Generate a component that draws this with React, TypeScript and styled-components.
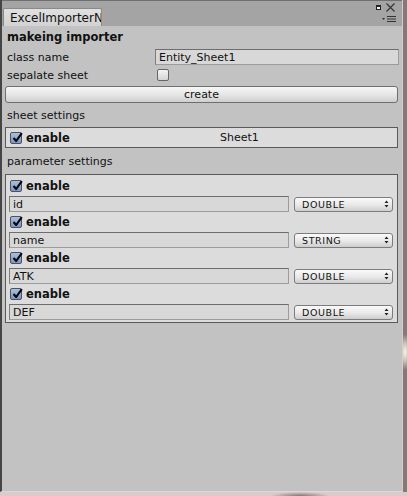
import React from "react";
import styled, { createGlobalStyle } from "styled-components";

const Global = createGlobalStyle`
  html, body { margin: 0; padding: 0; }
  body {
    width: 407px;
    height: 496px;
    overflow: hidden;
    font-family: "DejaVu Sans", "Liberation Sans", sans-serif;
    font-size: 11px;
    color: #111;
    background:
      radial-gradient(ellipse 6px 18px at 405px 352px, #fff6ea 0%, rgba(255,240,225,0.6) 50%, rgba(255,240,225,0) 100%),
      linear-gradient(90deg, #8c7a76 0%, #8a7672 100%);
  }
`;

const Desktop = styled.div`
  width: 407px;
  height: 496px;
  display: flex;
  flex-direction: column;
  background:
    radial-gradient(ellipse 30px 4px at 300px 496px, rgba(60,50,50,0.55) 0%, rgba(60,50,50,0) 100%),
    linear-gradient(180deg, transparent 0, transparent 492px, #dccbcb 492px);
`;

const Window = styled.div`
  width: 400px;
  height: 491px;
  display: flex;
  flex-direction: column;
  background: #c2c2c2;
  border-left: 2px solid #454545;
  border-right: 1px solid #cfcfcf;
  border-bottom: 1px solid #d9d9d9;
`;

const TabBar = styled.div`
  position: relative;
  height: 25px;
  flex: none;
  display: flex;
  align-items: flex-end;
  padding-left: 1px;
  background: #a4a4a4;
  border-top: 1px solid #6f6f6f;
`;

const Tab = styled.div`
  width: 91px;
  height: 17px;
  padding-left: 6px;
  display: flex;
  align-items: center;
  overflow: hidden;
  white-space: nowrap;
  background: linear-gradient(180deg, #e0e0e0 0%, #d2d2d2 100%);
  border: 1px solid #8a8a8a;
  border-bottom: none;
  border-radius: 2px 2px 0 0;
  font-size: 12px;
  color: #111;
`;

const WinIcons = styled.div`
  position: absolute;
  right: 6px;
  top: 2px;
  display: flex;
  flex-direction: column;
  align-items: flex-end;
  gap: 3px;
`;

const Content = styled.div`
  display: flex;
  flex-direction: column;
  padding: 2px 3px 0 3px;
`;

const Title = styled.div`
  height: 18px;
  display: flex;
  align-items: center;
  padding-left: 2px;
  font-weight: bold;
  font-size: 11.5px;
`;

const FieldRow = styled.div<{ $mt: number }>`
  height: 16px;
  margin-top: ${(p) => p.$mt}px;
  display: grid;
  grid-template-columns: 148px 1fr;
  align-items: center;
  padding-left: 2px;
`;

const TextField = styled.div`
  height: 16px;
  box-sizing: border-box;
  display: flex;
  align-items: center;
  padding-left: 3px;
  background: #d8d8d8;
  border: 1px solid #9c9c9c;
  border-top-color: #6d6d6d;
  border-left-color: #7d7d7d;
  color: #111;
  overflow: hidden;
  white-space: nowrap;
`;

const CheckBox = styled.span<{ $checked?: boolean }>`
  width: 12px;
  height: 12px;
  box-sizing: border-box;
  flex: none;
  display: inline-flex;
  align-items: center;
  justify-content: center;
  border: 1px solid ${(p) => (p.$checked ? "#4a5260" : "#666")};
  border-radius: 2px;
  background: ${(p) =>
    p.$checked
      ? "linear-gradient(180deg, #a9bfe0 0%, #7c95c2 100%)"
      : "linear-gradient(180deg, #f4f4f4 0%, #d4d4d4 100%)"};
  position: relative;
`;

const Button = styled.div`
  margin-top: 3px;
  height: 17px;
  box-sizing: border-box;
  display: flex;
  align-items: center;
  justify-content: center;
  background: linear-gradient(180deg, #f6f6f6 0%, #e6e6e6 50%, #cfcfcf 100%);
  border: 1px solid #6f6f6f;
  border-radius: 3px;
  width: 393px;
`;

const Label = styled.div<{ $mt: number }>`
  height: 18px;
  margin-top: ${(p) => p.$mt}px;
  display: flex;
  align-items: center;
  padding-left: 2px;
`;

const Box = styled.div<{ $mt: number }>`
  margin-top: ${(p) => p.$mt}px;
  width: 393px;
  box-sizing: border-box;
  background: #dcdcdc;
  border: 1px solid #5a5a5a;
`;

const SheetRow = styled.div`
  height: 19px;
  display: grid;
  grid-template-columns: 210px 1fr;
  align-items: center;
  padding-left: 4px;
`;

const Enable = styled.label`
  display: flex;
  align-items: center;
  gap: 4px;
  height: 18px;
  font-weight: bold;
  font-size: 11.5px;
`;

const ParamList = styled.div`
  display: flex;
  flex-direction: column;
  gap: 1px;
  padding: 2px 4px 2px 3px;
`;

const ParamEnable = styled(Enable)`
  padding-left: 1px;
`;

const ParamRow = styled.div`
  height: 16px;
  display: grid;
  grid-template-columns: 280px 99px;
  column-gap: 5px;
  align-items: center;
`;

const Select = styled.div`
  height: 15px;
  box-sizing: border-box;
  display: flex;
  align-items: center;
  justify-content: space-between;
  padding: 0 3px 0 7px;
  background: linear-gradient(180deg, #fafafa 0%, #e8e8e8 55%, #cdcdcd 100%);
  border: 1px solid #7c7c7c;
  border-radius: 3px;
  font-size: 9.5px;
  letter-spacing: 0.6px;
  color: #111;
`;

const Check = () => (
  <svg width="11" height="11" viewBox="0 0 11 11" style={{ position: "absolute", left: 1, top: -1 }}>
    <path d="M1.5 6 L4.2 9 L9.8 1.2" stroke="#050505" strokeWidth="2.1" fill="none" strokeLinejoin="round" />
  </svg>
);

const Arrows = () => (
  <svg width="5" height="8" viewBox="0 0 5 8">
    <path d="M0.5 3 L2.5 0.5 L4.5 3 Z M0.5 5 L2.5 7.5 L4.5 5 Z" fill="#222" />
  </svg>
);

const params = [
  { name: "id", type: "DOUBLE" },
  { name: "name", type: "STRING" },
  { name: "ATK", type: "DOUBLE" },
  { name: "DEF", type: "DOUBLE" },
];

export default function App() {
  return (
    <>
      <Global />
      <Desktop>
        <Window>
          <TabBar>
            <Tab>ExcelImporterN</Tab>
            <WinIcons>
              <svg width="22" height="10" viewBox="0 0 22 10">
                <rect x="2.5" y="2.5" width="4" height="4" fill="#f2f2f2" stroke="#222" strokeWidth="1" />
                <rect x="2.5" y="2.5" width="4" height="1.5" fill="#222" />
                <path d="M12.5 0.5 L20.5 8.5 M20.5 0.5 L12.5 8.5" stroke="#333" strokeWidth="1.1" />
              </svg>
              <svg width="14" height="7" viewBox="0 0 14 7">
                <path d="M0 2 L3 2 L1.5 4 Z" fill="#333" />
                <path d="M5 0.5 H14 M5 3 H14 M5 5.5 H14" stroke="#333" strokeWidth="1.1" />
              </svg>
            </WinIcons>
          </TabBar>
          <Content>
            <Title>makeing importer</Title>
            <FieldRow $mt={3}>
              <span>class name</span>
              <TextField>Entity_Sheet1</TextField>
            </FieldRow>
            <FieldRow $mt={2}>
              <span>sepalate sheet</span>
              <CheckBox style={{ marginLeft: 2 }} />
            </FieldRow>
            <Button>create</Button>
            <Label $mt={3}>sheet settings</Label>
            <Box $mt={3}>
              <SheetRow>
                <Enable>
                  <CheckBox $checked>
                    <Check />
                  </CheckBox>
                  enable
                </Enable>
                <span>Sheet1</span>
              </SheetRow>
            </Box>
            <Label $mt={4}>parameter settings</Label>
            <Box $mt={4}>
              <ParamList>
                {params.map((p) => (
                  <React.Fragment key={p.name}>
                    <ParamEnable>
                      <CheckBox $checked>
                        <Check />
                      </CheckBox>
                      enable
                    </ParamEnable>
                    <ParamRow>
                      <TextField>{p.name}</TextField>
                      <Select>
                        <span>{p.type}</span>
                        <Arrows />
                      </Select>
                    </ParamRow>
                  </React.Fragment>
                ))}
              </ParamList>
            </Box>
          </Content>
        </Window>
      </Desktop>
    </>
  );
}
